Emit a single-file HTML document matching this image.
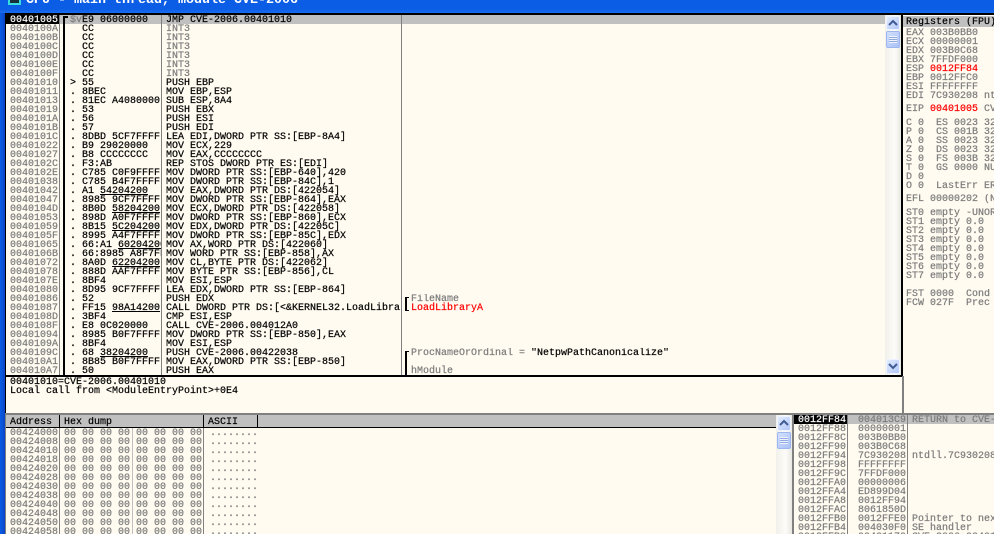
<!DOCTYPE html>
<html><head><meta charset="utf-8"><title>CPU</title>
<style>
html,body{margin:0;padding:0;background:#FFFBF0}
#r{position:relative;width:994px;height:534px;overflow:hidden;background:#FFFBF0;font-family:"Liberation Mono",monospace;font-size:10px;line-height:9px;color:#000}
#r div,#r pre{position:absolute;margin:0}
pre{font:inherit;line-height:9px;overflow:hidden;white-space:pre;padding-top:1px;-webkit-text-stroke:.2px currentColor}
.g{color:#7c7c7c}.k{color:#000}.red{color:#f00}
u{text-decoration-thickness:1px;text-underline-offset:1px}
.sb{background:linear-gradient(to right,#f1f0ea,#fdfcf8 60%,#e8e8e2)}
.btn{background:linear-gradient(135deg,#e2ebfe,#b2c8f8);border:1px solid #eef3ff;box-sizing:border-box;border-radius:2px}
.th{background:linear-gradient(135deg,#d3dffc,#aac2f6);border:1px solid #9db6f0;box-sizing:border-box;border-radius:2px}
.hdr{background:#c0c0c0}
</style></head><body><div id="r">
<div style="left:0;top:0;width:994px;height:13px;background:linear-gradient(to bottom,#0a5de4,#0a5de4 70%,#1a6cf0)"></div>
<div style="left:8px;top:0;width:13px;height:5px;background:#17303a;border:2px solid #39dcdc;border-top:0;box-sizing:border-box"></div>
<pre style="left:26px;top:-6px;width:320px;height:18px;color:#fff;font-weight:bold;font-size:13.33px;line-height:12px;-webkit-text-stroke:0">CPU - main thread, module CVE-2006</pre>
<div style="left:0;top:13px;width:5px;height:521px;background:linear-gradient(to right,#0a5de4,#0a46c8)"></div>
<div style="left:5px;top:13px;width:989px;height:2px;background:#000"></div>
<div style="left:5px;top:13px;width:1px;height:400px;background:#000"></div>
<div style="left:60px;top:15px;width:825px;height:9px;background:#c0c0c0"></div>
<div style="left:6px;top:15px;width:53px;height:9px;background:#000"></div>
<div style="left:59px;top:15px;width:1px;height:360px;background:#808080"></div>
<div style="left:161px;top:15px;width:1px;height:360px;background:#808080"></div>
<div style="left:401px;top:15px;width:1px;height:360px;background:#808080"></div>
<div style="left:63px;top:16px;width:2px;height:359px;background:#000"></div>
<div style="left:63px;top:16px;width:5px;height:2px;background:#000"></div>
<pre class="g" style="left:10px;top:15px;width:49px;height:360px"><span style="color:#fff">00401005</span>
0040100A
0040100B
0040100C
0040100D
0040100E
0040100F
00401010
00401011
00401013
00401019
0040101A
0040101B
0040101C
00401022
00401027
0040102C
0040102E
00401038
00401042
00401047
0040104D
00401053
00401059
0040105F
00401065
0040106B
00401072
00401078
0040107E
00401080
00401086
00401087
0040108D
0040108F
00401094
0040109A
0040109C
004010A1
004010A7</pre>
<pre style="left:70px;top:15px;width:91px;height:360px"><span class="g">$v</span>E9 06000000
  CC
  CC
  CC
  CC
  CC
  CC
&gt; 55
. 8BEC
. 81EC A4080000
. 53
. 56
. 57
. 8DBD 5CF7FFFF
. B9 29020000
. B8 CCCCCCCC
. F3:AB
. C785 C0F9FFFF
. C785 B4F7FFFF
. A1 <u>54204200</u>
. 8985 9CF7FFFF
. 8B0D <u>58204200</u>
. 898D A0F7FFFF
. 8B15 <u>5C204200</u>
. 8995 A4F7FFFF
. 66:A1 <u>60204200</u>
. 66:8985 A8F7FFFF
. 8A0D <u>62204200</u>
. 888D AAF7FFFF
. 8BF4
. 8D95 9CF7FFFF
. 52
. FF15 <u>98A14200</u>
. 3BF4
. E8 0C020000
. 8985 B0F7FFFF
. 8BF4
. 68 <u>38204200</u>
. 8B85 B0F7FFFF
. 50</pre>
<pre style="left:166px;top:15px;width:235px;height:360px">JMP CVE-2006.00401010
<span class="g">INT3
INT3
INT3
INT3
INT3
INT3</span>
PUSH EBP
MOV EBP,ESP
SUB ESP,8A4
PUSH EBX
PUSH ESI
PUSH EDI
LEA EDI,DWORD PTR SS:[EBP-8A4]
MOV ECX,229
MOV EAX,CCCCCCCC
REP STOS DWORD PTR ES:[EDI]
MOV DWORD PTR SS:[EBP-640],420
MOV DWORD PTR SS:[EBP-84C],1
MOV EAX,DWORD PTR DS:[422054]
MOV DWORD PTR SS:[EBP-864],EAX
MOV ECX,DWORD PTR DS:[422058]
MOV DWORD PTR SS:[EBP-860],ECX
MOV EDX,DWORD PTR DS:[42205C]
MOV DWORD PTR SS:[EBP-85C],EDX
MOV AX,WORD PTR DS:[422060]
MOV WORD PTR SS:[EBP-858],AX
MOV CL,BYTE PTR DS:[422062]
MOV BYTE PTR SS:[EBP-856],CL
MOV ESI,ESP
LEA EDX,DWORD PTR SS:[EBP-864]
PUSH EDX
CALL DWORD PTR DS:[&lt;&amp;KERNEL32.LoadLibraryA&gt;]
CMP ESI,ESP
CALL CVE-2006.004012A0
MOV DWORD PTR SS:[EBP-850],EAX
MOV ESI,ESP
PUSH CVE-2006.00422038
MOV EAX,DWORD PTR SS:[EBP-850]
PUSH EAX</pre>
<div style="left:405px;top:297px;width:2px;height:14px;background:#000"></div>
<div style="left:405px;top:297px;width:4px;height:1px;background:#000"></div>
<div style="left:405px;top:310px;width:4px;height:1px;background:#000"></div>
<div style="left:405px;top:351px;width:2px;height:24px;background:#000"></div>
<div style="left:405px;top:351px;width:4px;height:1px;background:#000"></div>
<pre class="g" style="left:411px;top:294px;width:300px;height:18px">FileName
<span class="red">LoadLibraryA</span></pre>
<pre class="g" style="left:411px;top:348px;width:470px;height:27px">ProcNameOrOrdinal = <span class="k">"NetpwPathCanonicalize"</span>

hModule</pre>
<div class="sb" style="left:885px;top:15px;width:16px;height:360px"></div>
<div class="btn" style="left:886px;top:16px;width:14px;height:14px"></div>
<svg style="position:absolute;left:886px;top:16px" width="14" height="14"><path d="M3 9L7 5L11 9" fill="none" stroke="#3f5a94" stroke-width="2"/></svg>
<div class="th" style="left:886px;top:31px;width:14px;height:17px"></div>
<div style="left:889px;top:36px;width:8px;height:7px;background:repeating-linear-gradient(to bottom,#f0f4ff 0,#f0f4ff 1px,#8fa8e0 1px,#8fa8e0 2px)"></div>
<div class="btn" style="left:886px;top:359px;width:14px;height:15px"></div>
<svg style="position:absolute;left:886px;top:359px" width="14" height="15"><path d="M3 5L7 9L11 5" fill="none" stroke="#3f5a94" stroke-width="2"/></svg>
<div style="left:5px;top:375px;width:898px;height:2px;background:#000"></div>
<div style="left:901px;top:15px;width:2px;height:361px;background:#000"></div>
<div style="left:902px;top:376px;width:2px;height:37px;background:#808080"></div>
<pre style="left:10px;top:377px;width:880px;height:30px">00401010=CVE-2006.00401010
Local call from &lt;ModuleEntryPoint&gt;+0E4</pre>
<div class="hdr" style="left:903px;top:15px;width:91px;height:12px"></div>
<div style="left:903px;top:15px;width:91px;height:1px;background:#fff"></div>
<pre style="left:906px;top:17px;width:88px;height:9px">Registers (FPU)</pre>
<pre class="g" style="left:906px;top:28px;width:88px;height:72px">EAX 003B0BB0
ECX 00000001
EDX 003B0C68
EBX 7FFDF000
ESP <span class="red">0012FF84</span>
EBP 0012FFC0
ESI FFFFFFFF
EDI 7C930208 ntdll.7C930208</pre>
<pre class="g" style="left:906px;top:104px;width:88px;height:9px">EIP <span class="red">00401005</span> CVE-2006.00401005</pre>
<pre class="g" style="left:906px;top:118px;width:88px;height:72px">C 0  ES 0023 32bit 0(FFFFFFFF)
P 0  CS 001B 32bit 0(FFFFFFFF)
A 0  SS 0023 32bit 0(FFFFFFFF)
Z 0  DS 0023 32bit 0(FFFFFFFF)
S 0  FS 003B 32bit 7FFDF000(FFF)
T 0  GS 0000 NULL
D 0
O 0  LastErr ERROR_SUCCESS</pre>
<pre class="g" style="left:906px;top:194px;width:88px;height:9px">EFL 00000202 (NO,NB,NE,A,NS,PO)</pre>
<pre class="g" style="left:906px;top:208px;width:88px;height:72px">ST0 empty -UNORM BDEC 00000000
ST1 empty 0.0
ST2 empty 0.0
ST3 empty 0.0
ST4 empty 0.0
ST5 empty 0.0
ST6 empty 0.0
ST7 empty 0.0</pre>
<pre class="g" style="left:906px;top:289px;width:88px;height:18px">FST 0000  Cond 0 0 0 0
FCW 027F  Prec NEAR,53</pre>
<div style="left:5px;top:413px;width:989px;height:2px;background:#808080"></div>
<div class="hdr" style="left:6px;top:415px;width:770px;height:12px"></div>
<div style="left:59px;top:415px;width:1px;height:12px;background:#000"></div>
<div style="left:203px;top:415px;width:1px;height:12px;background:#000"></div>
<div style="left:257px;top:415px;width:1px;height:12px;background:#000"></div>
<pre style="left:10px;top:417px;width:46px;height:9px">Address</pre>
<pre style="left:64px;top:417px;width:60px;height:9px">Hex dump</pre>
<pre style="left:208px;top:417px;width:40px;height:9px">ASCII</pre>
<div style="left:5px;top:427px;width:771px;height:1px;background:#000"></div>
<div style="left:5px;top:415px;width:1px;height:119px;background:#808080"></div>
<div style="left:59px;top:428px;width:1px;height:106px;background:#808080"></div>
<div style="left:132px;top:428px;width:1px;height:106px;background:#c0c0c0"></div>
<div style="left:203px;top:428px;width:1px;height:106px;background:#808080"></div>
<pre class="g" style="left:10px;top:428px;width:49px;height:106px">00424000
00424008
00424010
00424018
00424020
00424028
00424030
00424038
00424040
00424048
00424050
00424058</pre>
<pre class="g" style="left:64px;top:428px;width:138px;height:106px">00 00 00 00 00 00 00 00
00 00 00 00 00 00 00 00
00 00 00 00 00 00 00 00
00 00 00 00 00 00 00 00
00 00 00 00 00 00 00 00
00 00 00 00 00 00 00 00
00 00 00 00 00 00 00 00
00 00 00 00 00 00 00 00
00 00 00 00 00 00 00 00
00 00 00 00 00 00 00 00
00 00 00 00 00 00 00 00
00 00 00 00 00 00 00 00</pre>
<pre class="g" style="left:210px;top:428px;width:50px;height:106px">........
........
........
........
........
........
........
........
........
........
........
........</pre>
<div class="sb" style="left:776px;top:415px;width:16px;height:119px"></div>
<div class="btn" style="left:777px;top:416px;width:14px;height:15px"></div>
<svg style="position:absolute;left:777px;top:416px" width="14" height="15"><path d="M3 9L7 5L11 9" fill="none" stroke="#3f5a94" stroke-width="2"/></svg>
<div class="th" style="left:777px;top:432px;width:14px;height:17px"></div>
<div style="left:780px;top:437px;width:8px;height:7px;background:repeating-linear-gradient(to bottom,#f0f4ff 0,#f0f4ff 1px,#8fa8e0 1px,#8fa8e0 2px)"></div>
<div style="left:792px;top:415px;width:2px;height:119px;background:#808080"></div>
<div style="left:848px;top:415px;width:146px;height:9px;background:#c0c0c0"></div>
<div style="left:794px;top:415px;width:53px;height:9px;background:#000"></div>
<div style="left:847px;top:415px;width:1px;height:119px;background:#808080"></div>
<div style="left:907px;top:415px;width:1px;height:119px;background:#808080"></div>
<pre class="g" style="left:798px;top:415px;width:49px;height:119px"><span style="color:#fff">0012FF84</span>
0012FF88
0012FF8C
0012FF90
0012FF94
0012FF98
0012FF9C
0012FFA0
0012FFA4
0012FFA8
0012FFAC
0012FFB0
0012FFB4
0012FFB8</pre>
<pre class="g" style="left:858px;top:415px;width:49px;height:119px">004013C9
00000001
003B0BB0
003B0C68
7C930208
FFFFFFFF
7FFDF000
00000006
ED899D04
0012FF94
8061850D
0012FFE0
004030F0
00401170</pre>
<pre class="g" style="left:912px;top:415px;width:82px;height:119px">RETURN to CVE-2006
 
 
 
ntdll.7C930208
 
 
 
 
 
 
Pointer to next SEH
SE handler
CVE-2006.00401170</pre>
</div></body></html>
